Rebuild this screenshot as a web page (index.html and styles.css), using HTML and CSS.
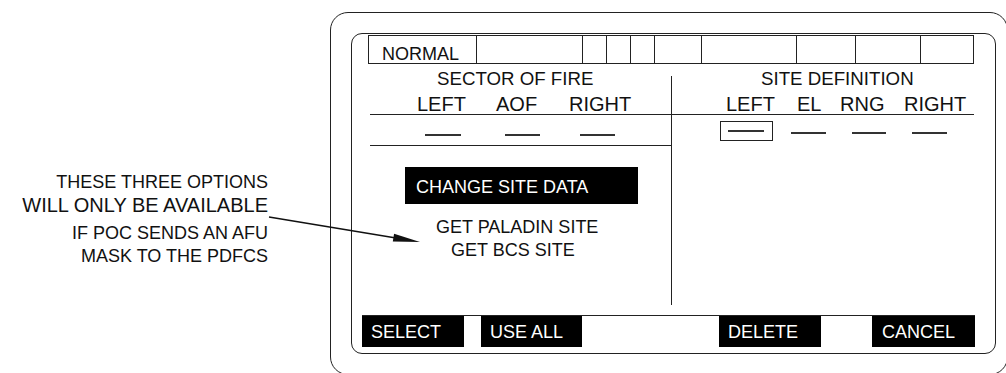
FILE: index.html
```html
<!DOCTYPE html>
<html lang="en">
<head>
<meta charset="utf-8">
<title>Site Definition</title>
<link rel="stylesheet" href="styles.css">
</head>
<body>
<div class="page">
  <div class="callout">
    <p class="cl">THESE THREE OPTIONS</p>
    <p class="cl cl-big">WILL ONLY BE AVAILABLE</p>
    <p class="cl cl-gap">IF POC SENDS AN AFU</p>
    <p class="cl">MASK TO THE PDFCS</p>
  </div>

  <div class="device">
    <div class="screen">
      <div class="status">
        <div class="cell cell-normal">NORMAL</div>
        <div class="cell"></div>
        <div class="cell"></div>
        <div class="cell"></div>
        <div class="cell"></div>
        <div class="cell"></div>
        <div class="cell"></div>
        <div class="cell"></div>
        <div class="cell"></div>
        <div class="cell"></div>
      </div>

      <div class="main">
        <div class="col col-left">
          <div class="title title-left">SECTOR OF FIRE</div>
          <div class="heads heads-left">
            <span>LEFT</span><span>AOF</span><span>RIGHT</span>
          </div>
          <div class="fields fields-left">
            <span class="dash d1"></span>
            <span class="dash d2"></span>
            <span class="dash d3"></span>
          </div>
          <div class="menu-sel">CHANGE SITE DATA</div>
          <div class="opt opt-1">GET PALADIN SITE</div>
          <div class="opt opt-2">GET BCS SITE</div>
        </div>
        <div class="vdiv"></div>
        <div class="col col-right">
          <div class="title title-right">SITE DEFINITION</div>
          <div class="heads heads-right">
            <span>LEFT</span><span>EL</span><span>RNG</span><span>RIGHT</span>
          </div>
          <div class="fields fields-right">
            <span class="fbox"><span class="dash dash-in"></span></span>
            <span class="dash r1"></span>
            <span class="dash r2"></span>
            <span class="dash r3"></span>
          </div>
        </div>
      </div>

      <div class="softkeys">
        <div class="key key-select">SELECT</div>
        <div class="key key-useall">USE ALL</div>
        <div class="key key-delete">DELETE</div>
        <div class="key key-cancel">CANCEL</div>
      </div>
    </div>
  </div>

  <svg class="arrow" width="1006" height="373" viewBox="0 0 1006 373" aria-hidden="true">
    <line x1="269" y1="217" x2="396" y2="238" stroke="#111" stroke-width="1.5"/>
    <polygon points="420,242 394.1,233.7 392.8,241.6" fill="#111"/>
  </svg>
</div>
</body>
</html>
```

FILE: styles.css
```css
* {
  box-sizing: border-box;
}

html, body {
  margin: 0;
  padding: 0;
  background: #fff;
}

body {
  width: 1006px;
  height: 373px;
  overflow: hidden;
  font-family: "Liberation Sans", Arial, sans-serif;
  color: #111;
  font-size: 18px;
  line-height: 20px;
}

.page {
  position: relative;
  display: flex;
  align-items: flex-start;
  width: 1006px;
  height: 373px;
  overflow: hidden;
}

/* ---------- callout ---------- */
.callout {
  flex: 0 0 268px;
  padding-top: 171px;
  text-align: right;
}

.cl {
  margin: 0;
  font-size: 18px;
  line-height: 23px;
  white-space: nowrap;
}

.cl-big {
  font-size: 20px;
}

.cl-gap {
  margin-top: 5px;
}

/* ---------- device frame ---------- */
.device {
  flex: 0 0 auto;
  margin-left: 62px;
  margin-top: 12px;
  width: 678px;
  height: 363px;
  border: 1.5px solid #222;
  border-radius: 18px;
  padding: 19.5px 0 0 19.5px;
}

.screen {
  width: 645px;
  height: 321px;
  border: 1.5px solid #222;
  border-radius: 11px;
  display: flex;
  flex-direction: column;
}

/* ---------- status bar ---------- */
.status {
  margin: 1.5px 0 0 16.5px;
  width: 606px;
  height: 29px;
  border: 1px solid #222;
  display: grid;
  grid-template-columns: 107px 106px 24px 24px 24px 47px 95px 59px 65px 53px;
}

.cell {
  border-left: 1px solid #222;
}

.cell-normal {
  border-left: none;
  padding: 8px 0 0 13px;
  line-height: 20px;
  white-space: nowrap;
}

/* ---------- main area ---------- */
.main {
  margin-left: 16.5px;
  width: 606px;
  height: 251px;
  display: flex;
}

.col-left {
  width: 303px;
  padding-left: 2px;
}

.vdiv {
  width: 1px;
  height: 229px;
  margin-top: 12px;
  background: #222;
}

.col-right {
  width: 302px;
}

.title {
  margin-top: 5px;
  height: 20px;
  font-size: 18.7px;
  white-space: nowrap;
}

.title-left {
  padding-left: 67px;
}

.title-right {
  padding-left: 89px;
}

.heads {
  margin-top: 5px;
  height: 21px;
  border-bottom: 1px solid #222;
  font-size: 20px;
  line-height: 20px;
  display: grid;
  white-space: nowrap;
}

.heads-left {
  padding-left: 47px;
  grid-template-columns: 79px 73px auto;
}

.heads-right {
  padding-left: 54px;
  grid-template-columns: 71px 43px 64px auto;
}

.fields {
  display: flex;
  align-items: flex-start;
  height: 31px;
}

.fields-left {
  border-bottom: 1px solid #222;
  padding: 19px 0 0 55px;
}

.dash {
  display: block;
  height: 1.5px;
  background: #333;
}

.d1 { width: 36px; }
.d2 { width: 35px; margin-left: 44px; }
.d3 { width: 35px; margin-left: 40px; }

.fields-right {
  padding: 6px 0 0 48px;
}

.fbox {
  display: flex;
  align-items: center;
  width: 53px;
  height: 20px;
  border: 1px solid #222;
  padding-left: 7px;
}

.dash-in {
  width: 36px;
}

.r1 { width: 35px; margin: 11px 0 0 18px; }
.r2 { width: 34px; margin: 11px 0 0 26px; }
.r3 { width: 35px; margin: 11px 0 0 26px; }

/* ---------- menu ---------- */
.menu-sel {
  margin: 21px 0 0 35px;
  width: 233px;
  height: 37px;
  background: #000;
  color: #fff;
  padding: 10px 0 0 11px;
  white-space: nowrap;
}

.opt {
  line-height: 23px;
  white-space: nowrap;
}

.opt-1 {
  margin-top: 12px;
  padding-left: 66px;
}

.opt-2 {
  padding-left: 81px;
}

/* ---------- soft keys ---------- */
.softkeys {
  margin-left: 10.5px;
  width: 613px;
  border-top: 1px solid #222;
  display: flex;
}

.key {
  height: 31px;
  background: #000;
  color: #fff;
  padding: 6px 0 0 9px;
  white-space: nowrap;
}

.key-select { width: 102px; }
.key-useall { width: 101px; margin-left: 17px; }
.key-delete { width: 102px; margin-left: 137px; }
.key-cancel { width: 103px; margin-left: 51px; padding-left: 10px; }

/* ---------- arrow overlay ---------- */
.arrow {
  position: absolute;
  left: 0;
  top: 0;
  pointer-events: none;
}
```
